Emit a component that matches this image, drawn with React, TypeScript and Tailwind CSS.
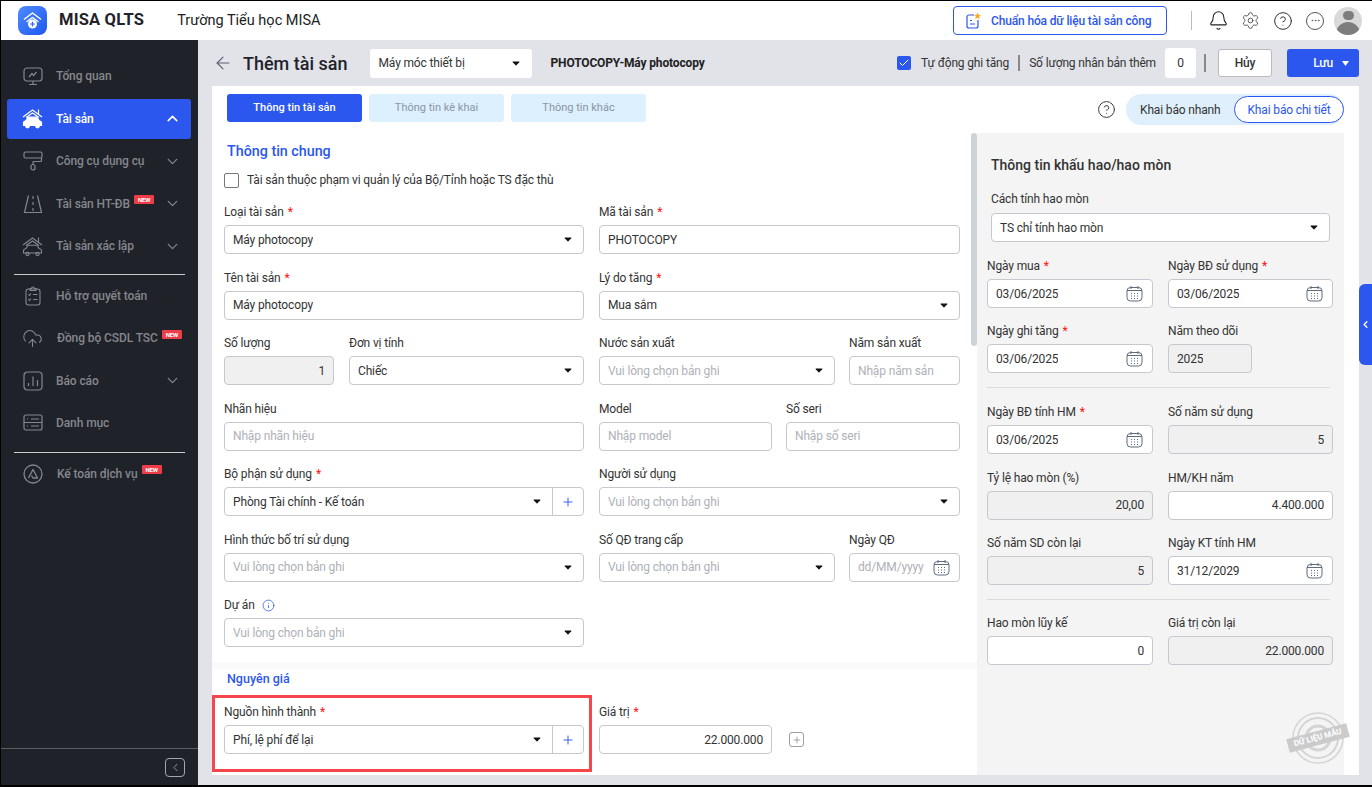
import React from "react";
import { ArrowLeft, Bell, Settings, CircleHelp, Ellipsis, ChevronDown, ChevronUp, ChevronLeft, Plus, Check, Info, CloudUpload } from "lucide-react";

const Caret = () => (
  <svg width="8" height="5" viewBox="0 0 9 6" className="shrink-0"><path d="M1 .5h7c.5 0 .7.5.4.9L5 5.2c-.3.3-.7.3-1 0L.6 1.4C.3 1 .5.5 1 .5z" fill="#111" /></svg>
);

const CalIcon = () => (
  <svg width="17" height="17" viewBox="0 0 17 17" fill="none" stroke="#5f6b7d" strokeWidth="1" className="shrink-0">
    <rect x="1" y="2.500" width="15" height="13.500" rx="3.500" />
    <path d="M5 1v3M12 1v3M1 5.500h15" />
    <path d="M5 8.500h1M8 8.500h1M11 8.500h1M5 11h1M8 11h1M11 11h1M5 13.500h1M8 13.500h1M11 13.500h1" />
  </svg>
);

const Logo = () => (
  <div className="w-[29px] h-[29px] rounded-[8px] bg-gradient-to-br from-[#4f8bff] to-[#1f55f0] flex items-center justify-center shrink-0">
    <svg width="21" height="21" viewBox="0 0 21 21" fill="none" stroke="#fff" strokeWidth="1.5" strokeLinecap="round" strokeLinejoin="round">
      <path d="M2.500 9 10.500 3l8 6" />
      <path d="M5 11.500 10.500 7.500l5.500 4" />
      <circle cx="10.500" cy="14" r="4.500" fill="#fff" stroke="none" />
      <path d="M10.500 12v4M8.500 14h4" stroke="#2b62f0" strokeWidth="1.200" />
    </svg>
  </div>
);

const iconCls = "fill-none stroke-current";

const MonitorChart = () => (
  <svg width="20" height="20" viewBox="0 0 20 20" className={iconCls} strokeWidth="1.200">
    <rect x="1" y="2" width="18" height="13" rx="3" />
    <path d="M10 15v3M6 18.500h8M6 11l3-3.500 1.500 2L13.500 6" />
  </svg>
);
const HouseCar = () => (
  <svg width="21" height="21" viewBox="0 0 21 21" className={iconCls} strokeWidth="1.200">
    <path d="M1 9 10.500 2 20 9M16.500 1.500V6" />
    <path d="M4 9.500 10.500 5 17 9.500" />
    <path d="M1.500 17.500v-3c0-1 1-1.500 2.500-2l1.500-2.500c.3-.5.8-.8 1.500-.8h7c.7 0 1.200.3 1.500.8l1.500 2.500c1.500.5 2.500 1 2.500 2v3z" fill="currentColor" />
    <circle cx="5.500" cy="18" r="1.800" fill="currentColor" />
    <circle cx="15.500" cy="18" r="1.800" fill="currentColor" />
  </svg>
);
const HouseCarLine = () => (
  <svg width="21" height="21" viewBox="0 0 21 21" className={iconCls} strokeWidth="1.100">
    <path d="M1 9 10.500 2 20 9M16.500 1.500V6" />
    <path d="M4 9.500 10.500 5 17 9.500" />
    <path d="M1.500 17v-2.500c0-1 1-1.500 2.500-2l1.500-2.500c.3-.5.800-.8 1.500-.8h7c.7 0 1.200.3 1.500.8l1.500 2.500c1.500.5 2.500 1 2.500 2V17z" />
    <circle cx="5.500" cy="18" r="1.600" />
    <circle cx="15.500" cy="18" r="1.600" />
  </svg>
);
const Roller = () => (
  <svg width="20" height="20" viewBox="0 0 20 20" className={iconCls} strokeWidth="1.200">
    <rect x="1" y="1" width="18" height="6" rx="1.500" />
    <path d="M10 10.500h7.500a1 1 0 0 0 1-1V7M10 10.500v3" />
    <rect x="8" y="13.500" width="4" height="5.500" rx="2" />
  </svg>
);
const Road = () => (
  <svg width="20" height="20" viewBox="0 0 20 20" className={iconCls} strokeWidth="1.200">
    <path d="M5.500 1.500 1.500 18.500h17l-4-17" />
    <path d="M10 2v3M10 8v3M10 14v3" />
  </svg>
);
const Clipboard = () => (
  <svg width="20" height="20" viewBox="0 0 20 20" className={iconCls} strokeWidth="1.100">
    <rect x="3" y="3" width="14" height="16" rx="2.500" />
    <path d="M7 3.500V2.500h1.500a1.500 1.500 0 0 1 3 0H13v2H7z" />
    <path d="m5.500 8.500 1 1 1.500-2M10 8.500h4.500M5.500 13.500l1 1 1.500-2M10 13.500h4.500" />
  </svg>
);
const ChartBox = () => (
  <svg width="20" height="20" viewBox="0 0 20 20" className={iconCls} strokeWidth="1.200">
    <rect x="1" y="1" width="18" height="18" rx="3.500" />
    <path d="M5.500 15v-3M10 15V5.500M14.500 15V9" />
  </svg>
);
const Catalog = () => (
  <svg width="20" height="20" viewBox="0 0 20 20" className={iconCls} strokeWidth="1.200">
    <rect x="1" y="2" width="18" height="15" rx="2" />
    <path d="M1 9.500h18M4 6h1M8 6h8M4 13h1M8 13h8" />
  </svg>
);
const AccountLogo = () => (
  <svg width="20" height="20" viewBox="0 0 20 20" className={iconCls} strokeWidth="1.300">
    <circle cx="10" cy="10" r="9" />
    <path d="M5.500 14 10 5.500 14.500 14H10l-1.500-2.500" strokeLinejoin="round" />
  </svg>
);

const NewBadge = () => (
  <span className="bg-[#ef3d47] text-white text-[6px] font-bold leading-[9px] px-[4px] rounded-[1px] tracking-tight">NEW</span>
);

type NavProps = { icon: React.ReactNode; label: string; isNew?: boolean; arrow?: boolean; active?: boolean; shift?: boolean };

const NavItem = ({ icon, label, isNew, arrow, active, shift }: NavProps) => (
  <div className="h-[42.5px] flex items-center px-[6px]">
    <div className={`w-[184px] h-10 rounded-[3px] flex items-center pl-[15px] pr-[10px] ${active ? "bg-[#2b57ee] text-white" : "text-[#85878d]"}`}>
      <span className="w-[21px] flex justify-center shrink-0">{icon}</span>
      <span className={`${shift ? "ml-[14px]" : "ml-[13px]"} text-[12px] tracking-[-0.1px] font-medium whitespace-nowrap`}>{label}</span>
      {isNew && <span className="ml-1 -mt-2 flex"><NewBadge /></span>}
      {arrow && (
        <span className="ml-auto">
          {active ? <ChevronUp size={17} strokeWidth={2.2} /> : <ChevronDown size={17} strokeWidth={1.800} />}
        </span>
      )}
    </div>
  </div>
);

const Divider = () => <div className="mx-[13px] h-px bg-[#c9cacc]" />;

const Sidebar = () => (
  <aside className="w-[197px] shrink-0 bg-[#1f2229] flex flex-col pt-[15px]">
    <NavItem icon={<MonitorChart />} label="Tổng quan" />
    <NavItem icon={<HouseCar />} label="Tài sản" arrow active />
    <NavItem icon={<Roller />} label="Công cụ dụng cụ" arrow />
    <NavItem icon={<Road />} label="Tài sản HT-ĐB" isNew arrow />
    <NavItem icon={<HouseCarLine />} label="Tài sản xác lập" arrow />
    <div className="mt-[6px]"><Divider /></div>
    <NavItem icon={<Clipboard />} label="Hỗ trợ quyết toán" />
    <NavItem icon={<CloudUpload size={21} strokeWidth={1.2} />} label="Đồng bộ CSDL TSC" isNew shift />
    <NavItem icon={<ChartBox />} label="Báo cáo" arrow />
    <NavItem icon={<Catalog />} label="Danh mục" />
    <div className="mt-[7px]"><Divider /></div>
    <NavItem icon={<AccountLogo />} label="Kế toán dịch vụ" isNew shift />
    <div className="mt-auto border-t border-[#5b5d63] h-[37px] flex items-center justify-end pr-[13px]">
      <div className="w-5 h-[19px] border border-[#a5a6aa] rounded-[4px] flex items-center justify-center text-[#b5b6ba]">
        <ChevronLeft size={13} strokeWidth={1.400} />
      </div>
    </div>
  </aside>
);

const TopBar = () => (
  <header className="h-[39px] bg-white flex items-center pl-[17px] pr-[10px] shrink-0">
    <Logo />
    <span className="ml-3 text-[16.500px] font-bold text-[#1f2229] tracking-[0.2px]">MISA QLTS</span>
    <span className="ml-[33px] text-[14.500px] text-[#222]">Trường Tiểu học MISA</span>
    <button className="ml-auto w-[214px] shrink-0 h-[29px] border border-[#2b57ee] rounded-[4px] flex items-center pl-[11px] text-[12px] tracking-[-0.15px] font-medium text-[#2b57ee]">
      <svg width="17" height="17" viewBox="0 0 17 17" fill="none" stroke="#2b57ee" strokeWidth="1.200" className="shrink-0">
        <path d="M9 3H4a2 2 0 0 0-2 2v9a2 2 0 0 0 2 2h7a2 2 0 0 0 2-2V8" />
        <path d="M5 8.500h2M5 12h5" />
        <path d="m12.500.500 1 2.300 2.500.2-1.900 1.600.600 2.400-2.200-1.300-2.200 1.300.600-2.400L9 3l2.500-.2z" fill="#f9a825" stroke="none" />
      </svg>
      <span className="ml-[9px] whitespace-nowrap">Chuẩn hóa dữ liệu tài sản công</span>
    </button>
    <div className="ml-[24px] w-px h-[19px] bg-[#bbb]" />
    <Bell size={21} strokeWidth={1.2} className="ml-4 text-[#222] shrink-0" />
    <Settings size={19} strokeWidth={1.1} className="ml-[12px] text-[#444] shrink-0" />
    <CircleHelp size={20} strokeWidth={1.2} className="ml-[13px] text-[#333] shrink-0" />
    <span className="ml-[13px] w-[18px] h-[18px] shrink-0 rounded-full border border-[#555] flex items-center justify-center text-[#555]">
      <Ellipsis size={11} strokeWidth={1.5} />
    </span>
    <div className="ml-[10px] w-[28px] h-[28px] shrink-0 rounded-full bg-[#d9d9d9] overflow-hidden flex flex-col items-center">
      <div className="mt-[4px] w-[11px] h-[11px] rounded-full bg-[#7d7d7d]" />
      <div className="mt-[2px] w-[24px] h-[14px] rounded-t-full bg-[#7d7d7d]" />
    </div>
  </header>
);

const TitleBar = () => (
  <div className="h-[46px] flex items-center shrink-0 text-[12px] tracking-[-0.15px] text-[#333]">
    <ArrowLeft size={20} strokeWidth={1.4} className="ml-[15px] text-[#5b6270]" />
    <span className="ml-[10px] text-[18px] tracking-normal font-medium text-[#1f2229]">Thêm tài sản</span>
    <div className="ml-[22px] w-[162px] h-[29px] bg-white rounded-[3px] flex items-center px-[9px]">
      <span>Máy móc thiết bị</span>
      <span className="ml-auto mr-[3px]"><Caret /></span>
    </div>
    <span className="ml-[19px] font-bold text-[#222]">PHOTOCOPY-Máy photocopy</span>
    <span className="ml-auto w-[14px] h-[14px] rounded-[2px] bg-[#2b57ee] flex items-center justify-center">
      <Check size={12} strokeWidth={2} className="text-white" />
    </span>
    <span className="ml-[10px]">Tự động ghi tăng</span>
    <span className="ml-[9px] w-[2px] h-4 bg-[#888]" />
    <span className="ml-[9px]">Số lượng nhân bản thêm</span>
    <span className="ml-[9px] w-[31px] h-[30px] bg-white rounded-[3px] flex items-center justify-center">0</span>
    <span className="ml-[8px] w-[2px] h-[18px] bg-[#888]" />
    <button className="ml-[12px] w-[54px] h-[28px] bg-white border border-[#bbb] rounded-[3px] font-medium">Hủy</button>
    <button className="ml-[15px] mr-[13px] w-[72px] h-[28px] bg-[#2b57ee] rounded-[3px] text-white font-medium flex items-center justify-end pr-[10px] gap-[9px]">
      Lưu
      <svg width="7" height="5" viewBox="0 0 7 5"><path d="M0 0h7L3.500 5z" fill="#fff" /></svg>
    </button>
  </div>
);

const Req = () => <span className="text-[#f11] ml-1">*</span>;

const Label = ({ text, req, children }: { text: string; req?: boolean; children?: React.ReactNode }) => (
  <div className="h-5 mb-[3px] flex items-center text-[12px] tracking-[-0.15px] text-[#333] whitespace-nowrap">
    {text}
    {req && <Req />}
    {children}
  </div>
);

type InputProps = { value?: string; placeholder?: string; select?: boolean; date?: boolean; disabled?: boolean; right?: boolean; add?: boolean };

const Input = ({ value, placeholder, select, date, disabled, right, add }: InputProps) => (
  <div className={`h-[29px] border border-[#c6c8cc] rounded-[4px] flex items-center text-[12px] tracking-[-0.15px] ${disabled ? "bg-[#f0f0f0]" : "bg-white"}`}>
    <div className={`flex-1 min-w-0 flex items-center pl-[8px] pr-[8px] ${right ? "justify-end" : ""}`}>
      <span className={`min-w-0 whitespace-nowrap overflow-hidden ${value ? "text-[#333]" : "text-[#aeb1b7]"}`}>{value || placeholder}</span>
      {select && <span className="ml-auto mr-[3px]"><Caret /></span>}
      {date && <span className="ml-auto pl-[2px] mr-[1px]"><CalIcon /></span>}
    </div>
    {add && (
      <div className="w-[31px] h-full border-l border-[#c6c8cc] flex items-center justify-center text-[#2b57ee]">
        <Plus size={14} strokeWidth={1.6} />
      </div>
    )}
  </div>
);

const Field = ({ label, req, extra, ...rest }: InputProps & { label: string; req?: boolean; extra?: React.ReactNode }) => (
  <div className="min-w-0">
    <Label text={label} req={req}>{extra}</Label>
    <Input {...rest} />
  </div>
);

const PH = "Vui lòng chọn bản ghi";
const twoCols = "grid grid-cols-[360px_361px] gap-x-[15px]";

const FormLeft = () => (
  <div className="w-[765px] shrink-0 relative overflow-hidden">
    <div className="pl-[15px] pt-[8px] flex gap-[7px] text-[11px]">
      <div className="w-[135px] h-[28px] rounded-[3px] bg-[#2b57ee] text-white font-medium flex items-center justify-center">Thông tin tài sản</div>
      <div className="w-[135px] h-[28px] rounded-[3px] bg-[#dcf0fd] text-[#8a95a5] flex items-center justify-center">Thông tin kê khai</div>
      <div className="w-[135px] h-[28px] rounded-[3px] bg-[#dcf0fd] text-[#8a95a5] flex items-center justify-center">Thông tin khác</div>
    </div>
    <div className="pl-[15px] mt-[20px] h-5 flex items-center text-[14.300px] font-medium text-[#2b57ee]">Thông tin chung</div>
    <div className="pl-[12px] mt-[9px] flex items-center text-[12px] tracking-[-0.15px] text-[#333]">
      <span className="w-[15px] h-[15px] border border-[#777] rounded-[2px] bg-white" />
      <span className="ml-[8px]">Tài sản thuộc phạm vi quản lý của Bộ/Tỉnh hoặc TS đặc thù</span>
    </div>
    <div className="pl-[12px] mt-[13px] flex flex-col gap-y-[13.500px]">
      <div className={twoCols}>
        <Field label="Loại tài sản" req value="Máy photocopy" select />
        <Field label="Mã tài sản" req value="PHOTOCOPY" />
      </div>
      <div className={twoCols}>
        <Field label="Tên tài sản" req value="Máy photocopy" />
        <Field label="Lý do tăng" req value="Mua sắm" select />
      </div>
      <div className={twoCols}>
        <div className="grid grid-cols-[110px_235px] gap-x-[15px]">
          <Field label="Số lượng" value="1" disabled right />
          <Field label="Đơn vị tính" value="Chiếc" select />
        </div>
        <div className="grid grid-cols-[236px_111px] gap-x-[14px]">
          <Field label="Nước sản xuất" placeholder={PH} select />
          <Field label="Năm sản xuất" placeholder="Nhập năm sản" />
        </div>
      </div>
      <div className={twoCols}>
        <Field label="Nhãn hiệu" placeholder="Nhập nhãn hiệu" />
        <div className="grid grid-cols-[173px_174px] gap-x-[14px]">
          <Field label="Model" placeholder="Nhập model" />
          <Field label="Số seri" placeholder="Nhập số seri" />
        </div>
      </div>
      <div className={twoCols}>
        <Field label="Bộ phận sử dụng" req value="Phòng Tài chính - Kế toán" select add />
        <Field label="Người sử dụng" placeholder={PH} select />
      </div>
      <div className={twoCols}>
        <Field label="Hình thức bố trí sử dụng" placeholder={PH} select />
        <div className="grid grid-cols-[236px_111px] gap-x-[14px]">
          <Field label="Số QĐ trang cấp" placeholder={PH} select />
          <Field label="Ngày QĐ" placeholder="dd/MM/yyyy" date />
        </div>
      </div>
      <div className={twoCols}>
        <Field label="Dự án" placeholder={PH} select extra={<Info size={13} strokeWidth={1.4} className="ml-[7px] text-[#2b57ee]" />} />
      </div>
    </div>
    <div className="mt-[15px] h-[7px] bg-[#f9fafb]" />
    <div className="pl-[15px] h-5 flex items-center text-[12.500px] font-medium text-[#2b57ee]">Nguyên giá</div>
    <div className="pl-[12px] mt-[13px] relative">
      <div className={twoCols}>
        <Field label="Nguồn hình thành" req value="Phí, lệ phí để lại" select add />
        <div className="flex items-end">
          <div className="w-[173px]"><Field label="Giá trị" req value="22.000.000" right /></div>
          <span className="ml-[17px] mb-[7px] w-[15px] h-[15px] border border-[#9a9ea6] rounded-[3px] flex items-center justify-center text-[#777]">
            <Plus size={10} strokeWidth={1.5} />
          </span>
        </div>
      </div>
      <div className="absolute left-0 top-[-7px] w-[380px] h-[77px] border-[3px] border-[#f5474b] pointer-events-none" />
    </div>
    <div className="absolute right-0 top-[47px] w-[6px] h-[213px] rounded-[3px] bg-[#cfd2d6]" />
  </div>
);

const Stamp = () => (
  <div className="absolute right-[-6px] bottom-[10px] w-[64px] h-[54px] flex items-center justify-center">
    <svg width="52" height="52" viewBox="0 0 52 52" fill="none" stroke="#d4d4d4" className="absolute">
      <circle cx="26" cy="26" r="25" strokeWidth="1.500" />
      <circle cx="26" cy="26" r="20" strokeWidth="2" />
      <circle cx="26" cy="26" r="12" strokeWidth="3" />
    </svg>
    <span className="relative -rotate-[15deg] w-[62px] text-center bg-[#cbcbcb] text-white text-[8px] font-bold leading-[14px] whitespace-nowrap">DỮ LIỆU MẪU</span>
  </div>
);

const col2 = "grid grid-cols-[166px_165px] gap-x-[15px]";

const SidePanel = () => (
  <div className="flex-1 relative">
    <div className="flex justify-end items-center h-[39px] pt-[8px] pr-[15px]">
      <CircleHelp size={19} strokeWidth={1.2} className="text-[#333] mr-[10px]" />
      <div className="w-[218px] h-[31px] rounded-full bg-[#dff0fc] flex items-center text-[12px] tracking-[-0.15px] text-[#333] pl-[14px]">
        <span>Khai báo nhanh</span>
        <span className="ml-auto h-[27px] w-[110px] rounded-full border border-[#2b57ee] bg-white text-[#2b57ee] flex items-center justify-center">Khai báo chi tiết</span>
      </div>
    </div>
    <div className="absolute left-0 top-[47px] bottom-0 w-[367px] bg-[#f4f4f4] pt-[22px] pl-[10px] pr-[11px]">
      <div className="pl-[4px] h-5 flex items-center text-[14px] font-medium text-[#333]">Thông tin khấu hao/hao mòn</div>
      <div className="pl-[4px] mt-[14px] w-[343px]">
        <div className="h-5 mb-[4px] flex items-center text-[12px] tracking-[-0.15px] text-[#333]">Cách tính hao mòn</div>
        <Input value="TS chỉ tính hao mòn" select />
      </div>
      <div className="mt-[14px] flex flex-col gap-y-[13px]">
        <div className={col2}>
          <Field label="Ngày mua" req value="03/06/2025" date />
          <Field label="Ngày BĐ sử dụng" req value="03/06/2025" date />
        </div>
        <div className={col2}>
          <Field label="Ngày ghi tăng" req value="03/06/2025" date />
          <div className="w-[84px]"><Field label="Năm theo dõi" value="2025" disabled /></div>
        </div>
      </div>
      <div className="mt-[14px] h-px w-[343px] bg-[#dcdcdc]" />
      <div className="mt-[14px] flex flex-col gap-y-[13.500px]">
        <div className={col2}>
          <Field label="Ngày BĐ tính HM" req value="03/06/2025" date />
          <Field label="Số năm sử dụng" value="5" disabled right />
        </div>
        <div className={col2}>
          <Field label="Tỷ lệ hao mòn (%)" value="20,00" disabled right />
          <Field label="HM/KH năm" value="4.400.000" right />
        </div>
        <div className={col2}>
          <Field label="Số năm SD còn lại" value="5" disabled right />
          <Field label="Ngày KT tính HM" value="31/12/2029" date />
        </div>
      </div>
      <div className="mt-[14px] h-px w-[343px] bg-[#dcdcdc]" />
      <div className="mt-[13px]">
        <div className={col2}>
          <Field label="Hao mòn lũy kế" value="0" right />
          <Field label="Giá trị còn lại" value="22.000.000" disabled right />
        </div>
      </div>
      <Stamp />
    </div>
  </div>
);

export default function App() {
  return (
    <div className="w-[1372px] h-[787px] overflow-hidden flex flex-col border-t border-l border-b-2 border-black bg-[#e1e3e9]" style={{ fontFamily: "Roboto, 'Noto Sans', sans-serif" }}>
      <TopBar />
      <div className="flex-1 flex min-h-0">
        <Sidebar />
        <main className="flex-1 min-w-0 flex flex-col">
          <TitleBar />
          <div className="flex-1 flex min-h-0 pl-[14px] pb-[10px] relative">
            <div className="w-[1147px] bg-white flex overflow-hidden relative">
              <FormLeft />
              <SidePanel />
            </div>
            <div className="absolute right-0 top-[198px] w-[13px] h-[81px] bg-[#2b57ee] rounded-l-[6px] flex items-center justify-center text-white">
              <ChevronLeft size={11} strokeWidth={3} />
            </div>
          </div>
        </main>
      </div>
    </div>
  );
}
